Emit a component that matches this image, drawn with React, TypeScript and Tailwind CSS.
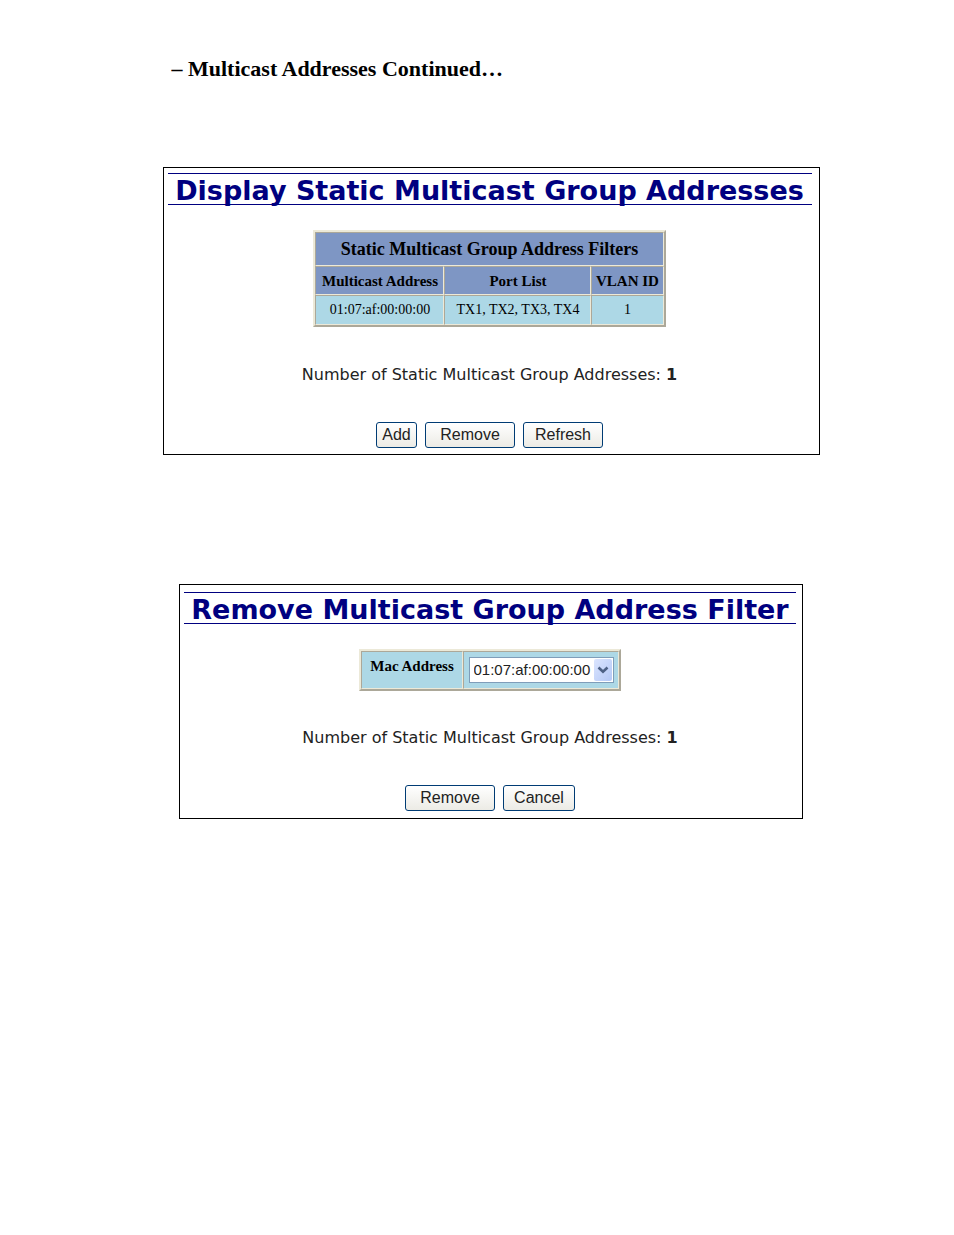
import type { ReactNode } from 'react';

const cell = 'border border-t-[#aca899] border-l-[#aca899] border-r-[#ece9d8] border-b-[#ece9d8] p-0 text-center align-middle';
const tableFrame =
  "mx-auto table-fixed border-separate border-spacing-0 border-2 border-t-[#ece9d8] border-l-[#ece9d8] border-r-[#aca899] border-b-[#aca899] font-['Liberation_Serif',serif]";

function PanelTitle({ children }: { children: ReactNode }) {
  return (
    <h2 className="flex justify-center border-y border-[#000080] pt-1 font-['DejaVu_Sans',sans-serif] text-[27px] leading-[26px] font-bold whitespace-nowrap text-[#000080]">
      {children}
    </h2>
  );
}

function AddressCount({ count }: { count: number }) {
  return (
    <p className="text-center font-['DejaVu_Sans',sans-serif] text-base leading-5 text-[#222]">
      Number of Static Multicast Group Addresses: <b>{count}</b>
    </p>
  );
}

function Button({ children, width }: { children: ReactNode; width: string }) {
  return (
    <button
      type="button"
      className={`h-[26px] rounded-[3px] border border-[#003c74] bg-linear-to-b from-white to-[#ecebe5] text-center font-['Liberation_Sans',sans-serif] text-base leading-6 text-[#222] ${width}`}
    >
      {children}
    </button>
  );
}

export default function App() {
  return (
    <main className="min-h-screen bg-white pt-[55px] pl-7 text-black">
      <div className="mx-auto w-full max-w-[657px]">
        <h1 className="pl-[9px] font-['Liberation_Serif',serif] text-[22px] leading-7 font-bold">
          – Multicast Addresses Continued…
        </h1>
      </div>

      <section className="mx-auto mt-[84px] w-full max-w-[657px] border border-black pt-[5px] pr-[7px] pb-[6px] pl-1">
        <PanelTitle>Display Static Multicast Group Addresses</PanelTitle>
        <table className={`mt-[25px] w-[352px] ${tableFrame}`}>
          <colgroup>
            <col className="w-[129px]" />
            <col className="w-[147px]" />
            <col className="w-[72px]" />
          </colgroup>
          <thead className="bg-[#7e96c4]">
            <tr className="h-[34px]">
              <th colSpan={3} className={`${cell} text-lg leading-6`}>
                Static Multicast Group Address Filters
              </th>
            </tr>
            <tr className="h-[29px] text-[15px] leading-5">
              <th className={cell}>Multicast Address</th>
              <th className={cell}>Port List</th>
              <th className={cell}>VLAN ID</th>
            </tr>
          </thead>
          <tbody className="bg-[#add8e6]">
            <tr className="h-[30px] text-sm leading-5">
              <td className={cell}>01:07:af:00:00:00</td>
              <td className={cell}>TX1, TX2, TX3, TX4</td>
              <td className={cell}>1</td>
            </tr>
          </tbody>
        </table>
        <div className="mt-[38px]">
          <AddressCount count={1} />
        </div>
        <div className="mt-[37px] flex justify-center gap-2">
          <Button width="w-[41px]">Add</Button>
          <Button width="w-[90px]">Remove</Button>
          <Button width="w-[80px]">Refresh</Button>
        </div>
      </section>

      <section className="mx-auto mt-[129px] w-full max-w-[624px] border border-black pt-[7px] pr-[6px] pb-[7px] pl-1">
        <PanelTitle>Remove Multicast Group Address Filter</PanelTitle>
        <table className={`mt-[25px] w-[262px] ${tableFrame}`}>
          <colgroup>
            <col className="w-[102px]" />
            <col className="w-[156px]" />
          </colgroup>
          <tbody className="bg-[#add8e6]">
            <tr className="h-[38px]">
              <th className={`${cell} pb-2 text-[15px] leading-5`}>
                <label htmlFor="mac-address">Mac Address</label>
              </th>
              <td className={cell}>
                <div className="relative mx-auto h-[26px] w-[145px]">
                  <select
                    id="mac-address"
                    className="block h-full w-full appearance-none border border-[#7f9db9] bg-white pl-1 font-['Liberation_Sans',sans-serif] text-[15px] leading-6 text-[#222]"
                  >
                    <option>01:07:af:00:00:00</option>
                  </select>
                  <span className="pointer-events-none absolute top-[2px] right-[2px] flex h-[22px] w-[18px] items-center justify-center rounded-[2px] bg-linear-to-br from-[#dbe5fe] to-[#b4c8f6]">
                    <svg width="12" height="8" viewBox="0 0 12 8" fill="none" aria-hidden="true">
                      <path d="M1.5 1.5 6 5.8 10.5 1.5" stroke="#4d6185" strokeWidth="2.6" />
                    </svg>
                  </span>
                </div>
              </td>
            </tr>
          </tbody>
        </table>
        <div className="mt-[37px]">
          <AddressCount count={1} />
        </div>
        <div className="mt-[37px] flex justify-center gap-2">
          <Button width="w-[90px]">Remove</Button>
          <Button width="w-[72px]">Cancel</Button>
        </div>
      </section>
    </main>
  );
}
